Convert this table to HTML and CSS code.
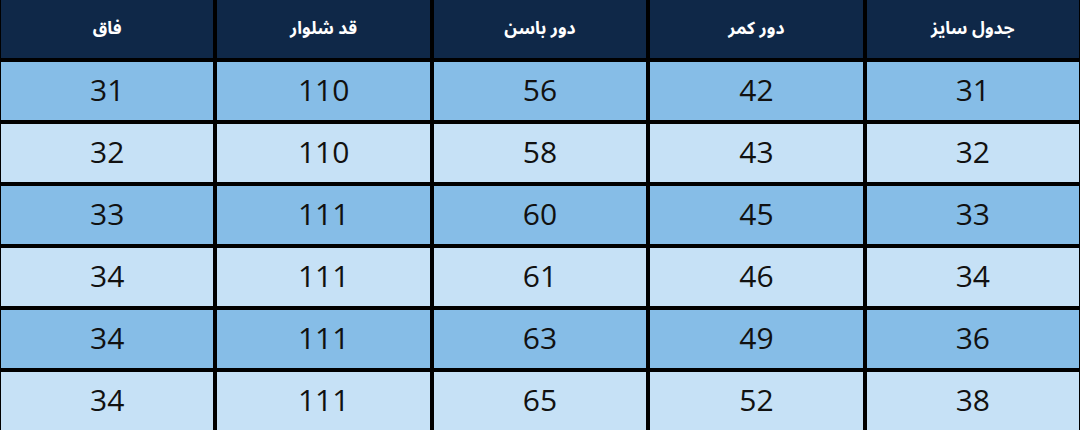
FILE: index.html
```html
<!DOCTYPE html>
<html lang="fa" dir="rtl">
<head>
<meta charset="utf-8">
<title>جدول سایز</title>
<link rel="stylesheet" href="styles.css">
</head>
<body>
<div class="size-table">
  <div class="cell head">جدول سایز</div>
  <div class="cell head">دور کمر</div>
  <div class="cell head">دور باسن</div>
  <div class="cell head">قد شلوار</div>
  <div class="cell head">فاق</div>

  <div class="cell dark">31</div><div class="cell dark">42</div><div class="cell dark">56</div><div class="cell dark">110</div><div class="cell dark">31</div>
  <div class="cell light">32</div><div class="cell light">43</div><div class="cell light">58</div><div class="cell light">110</div><div class="cell light">32</div>
  <div class="cell dark">33</div><div class="cell dark">45</div><div class="cell dark">60</div><div class="cell dark">111</div><div class="cell dark">33</div>
  <div class="cell light">34</div><div class="cell light">46</div><div class="cell light">61</div><div class="cell light">111</div><div class="cell light">34</div>
  <div class="cell dark">36</div><div class="cell dark">49</div><div class="cell dark">63</div><div class="cell dark">111</div><div class="cell dark">34</div>
  <div class="cell light">38</div><div class="cell light">52</div><div class="cell light">65</div><div class="cell light">111</div><div class="cell light">34</div>
</div>
</body>
</html>
```
FILE: styles.css
```css
html, body {
  margin: 0;
  padding: 0;
  width: 1080px;
  height: 430px;
  overflow: hidden;
  background: #000;
}
.size-table {
  direction: rtl;
  display: grid;
  grid-template-columns: repeat(5, 1fr);
  grid-auto-rows: 58px;
  gap: 4px;
  padding: 0 1px;
  background: #000;
}
.cell {
  display: flex;
  align-items: center;
  justify-content: center;
  font-family: "Open Sans", "Noto Sans", sans-serif;
  font-size: 30px;
  color: #111;
  padding-bottom: 3px;
}
.head {
  background: #0f2848;
  color: #fff;
  font-family: "Noto Sans Arabic", "DejaVu Sans", sans-serif;
  font-weight: bold;
  font-size: 17.5px;
  padding-bottom: 2px;
}
.dark {
  background: #86bde7;
}
.light {
  background: #c6e1f6;
}
```
